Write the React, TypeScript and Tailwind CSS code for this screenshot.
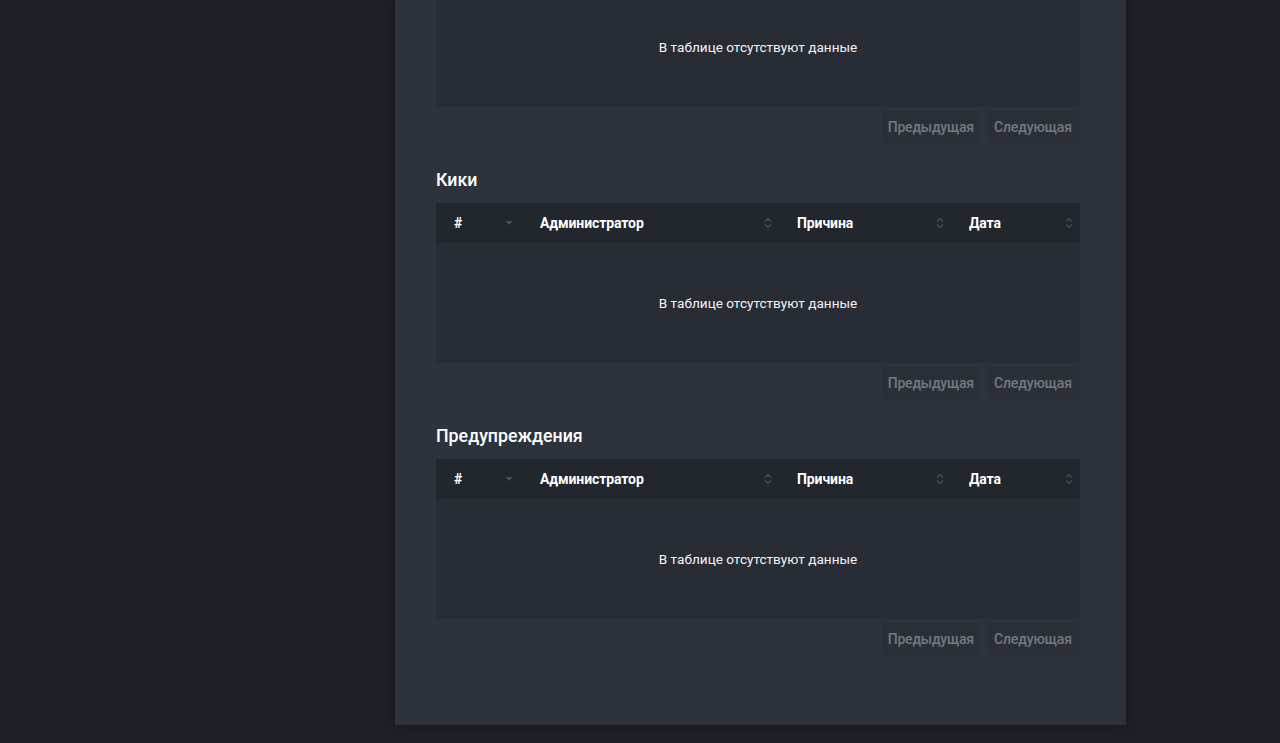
import React from "react";

const SortBoth = () => (
  <svg width="8" height="12" viewBox="0 0 8 12" fill="none" stroke="#4b515c" strokeWidth="1.2">
    <path d="M1 4.5 L4 1.5 L7 4.5" />
    <path d="M1 7.5 L4 10.5 L7 7.5" />
  </svg>
);

const SortDesc = () => (
  <svg width="8" height="6" viewBox="0 0 8 6">
    <path d="M0.5 1 L7.5 1 L4 5 Z" fill="#4b515c" />
  </svg>
);

const cols = [
  { label: "#", w: "w-[86px]", pr: "pr-[9px]", icon: <SortDesc /> },
  { label: "Администратор", w: "w-[257px]", pr: "pr-[7px]", icon: <SortBoth /> },
  { label: "Причина", w: "w-[172px]", pr: "pr-[7px]", icon: <SortBoth /> },
  { label: "Дата", w: "flex-1", pr: "pr-[7px]", icon: <SortBoth /> },
];

function Pager() {
  return (
    <div className="flex justify-end gap-[7px] mt-[4px] pr-[1px]">
      <button className="h-[32px] px-[6px] bg-[#2a2f38] text-[14px] font-medium tracking-[-0.2px] text-[#747a83]">Предыдущая</button>
      <button className="h-[32px] px-[7px] bg-[#2a2f38] text-[14px] font-medium tracking-[-0.1px] text-[#747a83]">Следующая</button>
    </div>
  );
}

function Empty({ h }: { h: string }) {
  return (
    <div className={`${h} bg-[#282c35] flex items-center justify-center text-[13.6px] text-[#f3f4f6]`}>
      В таблице отсутствуют данные
    </div>
  );
}

function Section({ title }: { title: string }) {
  return (
    <div className="flex flex-col">
      <h3 className="h-[28px] leading-[28px] mb-[9px] text-[17.8px] font-medium text-white">{title}</h3>
      <div className="flex flex-col">
        <div className="flex h-[40px] bg-[#22262d]">
          {cols.map((c) => (
            <div
              key={c.label}
              className={`${c.w} ${c.pr} flex items-center justify-between pl-[18px] text-[14px] font-bold text-white`}
            >
              <span className="tracking-[-0.1px]">{c.label}</span>
              {c.icon}
            </div>
          ))}
        </div>
        <Empty h="h-[120px]" />
      </div>
      <Pager />
    </div>
  );
}

export default function App() {
  return (
    <div
      className="min-h-screen bg-[#1d2027] overflow-hidden"
      style={{ fontFamily: "Roboto, 'Noto Sans', sans-serif" }}
    >
      <div className="ml-[395px] w-[731px] bg-[#2d333d] shadow-[0_0_10px_rgba(0,0,0,0.35)] pb-[70px] pl-[41px] pr-[46px] flex flex-col gap-[23px]">
        <div className="flex flex-col">
          <Empty h="h-[107px] pb-[13px]" />
          <Pager />
        </div>
        <Section title="Кики" />
        <Section title="Предупреждения" />
      </div>
    </div>
  );
}
